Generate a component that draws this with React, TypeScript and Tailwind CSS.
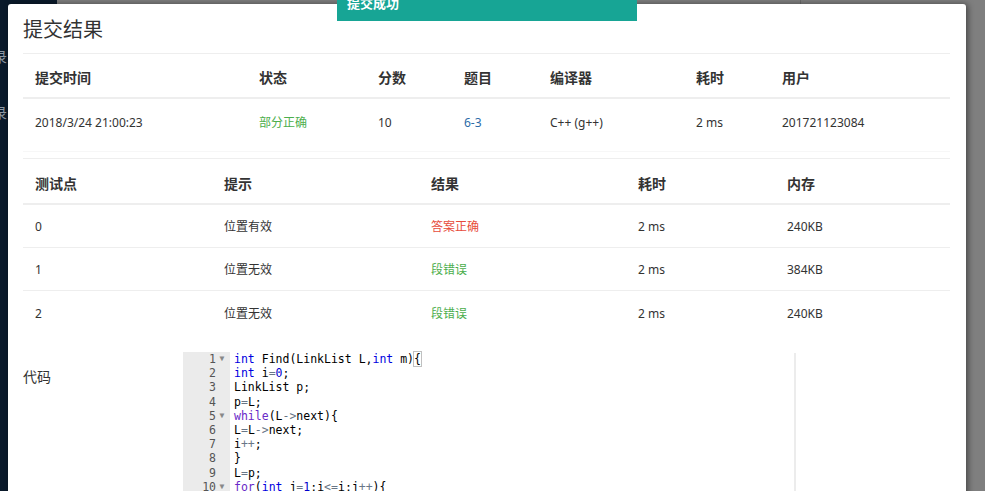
import React from 'react';

const cjk = '"Noto Sans", "Noto Sans CJK SC", sans-serif';
const mono = '"DejaVu Sans Mono", monospace';

const summaryHead = ['提交时间', '状态', '分数', '题目', '编译器', '耗时', '用户'];

const cases = [
  { id: '0', hint: '位置有效', result: '答案正确', color: 'text-[#e74c3c]', time: '2 ms', mem: '240KB' },
  { id: '1', hint: '位置无效', result: '段错误', color: 'text-[#4cae4c]', time: '2 ms', mem: '384KB' },
  { id: '2', hint: '位置无效', result: '段错误', color: 'text-[#4cae4c]', time: '2 ms', mem: '240KB' },
];

type Tok = [string, string?];

// ace "chrome"-like colours
const KW = 'text-[#0000e0]';
const CTRL = 'text-[#6a2ac8]';
const NUM = 'text-[#0000cd]';
const OP = 'text-[#687687]';

const code: { fold?: boolean; toks: Tok[] }[] = [
  { fold: true, toks: [['int', KW], [' Find(LinkList L,'], ['int', KW], [' m){']] },
  { toks: [['int', KW], [' i'], ['=', OP], ['0', NUM], [';']] },
  { toks: [['LinkList p;']] },
  { toks: [['p'], ['=', OP], ['L;']] },
  { fold: true, toks: [['while', CTRL], ['(L'], ['->', OP], ['next){']] },
  { toks: [['L'], ['=', OP], ['L'], ['->', OP], ['next;']] },
  { toks: [['i'], ['++', OP], [';']] },
  { toks: [['}']] },
  { toks: [['L'], ['=', OP], ['p;']] },
  { fold: true, toks: [['for', CTRL], ['('], ['int', KW], [' j'], ['=', OP], ['1', NUM], [';i'], ['<=', OP], ['i;j'], ['++', OP], ['){']] },
];

export default function App() {
  return (
    <div
      className="relative w-[985px] h-[491px] overflow-hidden bg-[#7f7f7f]"
      style={{ fontFamily: cjk }}
    >
      {/* dimmed page behind the dialog */}
      <div className="absolute left-0 top-0 h-full w-[57px] bg-[#0a1a2b]">
        <span className="absolute left-[-7px] top-[46px] text-[14px] text-[#8d97a3]">录</span>
        <span className="absolute left-[-7px] top-[102px] text-[14px] text-[#8d97a3]">录</span>
      </div>
      <div className="absolute left-[800px] top-0 h-[4px] w-px bg-[#6a6a6a]" />

      {/* dialog */}
      <div className="absolute left-[8px] top-[4px] w-[958px] h-[560px] bg-white rounded-[3px] shadow-[2px_0_6px_rgba(0,0,0,0.45)] pl-[15px] pr-[16px] text-[#333]">
        <div className="h-[49px] pt-[13px]">
          <h1 className="text-[20px] leading-[26px] font-normal text-[#333]">提交结果</h1>
        </div>

        {/* summary table */}
        <div className="border-t border-[#eee]">
          <div className="grid grid-cols-[224px_119px_86px_86px_146px_86px_1fr] h-[45px] pt-[3px] items-center border-b-2 border-[#eee] text-[14px] font-bold">
            {summaryHead.map((h) => (
              <div key={h} className="pl-[12px]">{h}</div>
            ))}
          </div>
          <div className="grid grid-cols-[224px_119px_86px_86px_146px_86px_1fr] h-[44px] pt-[3px] items-center text-[12px]">
            <div className="pl-[12px]">2018/3/24 21:00:23</div>
            <div className="pl-[12px] text-[#4cae4c]">部分正确</div>
            <div className="pl-[12px]">10</div>
            <div className="pl-[12px] text-[#2d6ca8]">6-3</div>
            <div className="pl-[12px]">C++ (g++)</div>
            <div className="pl-[12px]">2 ms</div>
            <div className="pl-[12px]">201721123084</div>
          </div>
          <div className="mt-[8px] h-px bg-[#f7f7f7]" />
        </div>

        {/* test cases */}
        <div className="mt-[6px] border-t border-[#eee]">
          <div className="grid grid-cols-[189px_207px_207px_149px_1fr] h-[46px] pt-[4px] items-center border-b-2 border-[#eee] text-[14px] font-bold">
            {['测试点', '提示', '结果', '耗时', '内存'].map((h) => (
              <div key={h} className="pl-[12px]">{h}</div>
            ))}
          </div>
          {cases.map((c, i) => (
            <div
              key={c.id}
              className={`grid grid-cols-[189px_207px_207px_149px_1fr] h-[43px] pt-[2px] items-center text-[12px] ${i < cases.length - 1 ? 'border-b border-[#eee]' : ''}`}
            >
              <div className="pl-[12px]">{c.id}</div>
              <div className="pl-[12px]">{c.hint}</div>
              <div className={`pl-[12px] ${c.color}`}>{c.result}</div>
              <div className="pl-[12px]">{c.time}</div>
              <div className="pl-[12px]">{c.mem}</div>
            </div>
          ))}
        </div>

        {/* code */}
        <div className="mt-[18px] flex">
          <div className="w-[160px] pt-[15px] text-[14px] leading-[20px]">代码</div>
          <div className="relative flex-1 flex">
            <div className="w-[47px] bg-[#ebebeb] text-[#555] text-[11.5px]" style={{ fontFamily: mono }}>
              {code.map((l, i) => (
                <div key={i} className="h-[14.2px] leading-[14.2px] flex justify-end pr-[2px]">
                  <span>{i + 1}</span>
                  <span className="w-[12px] text-center text-[8px] text-[#888]">{l.fold ? '▼' : ''}</span>
                </div>
              ))}
            </div>
            <div className="flex-1 pl-[4px] text-[11.5px] text-black whitespace-pre" style={{ fontFamily: mono }}>
              {code.map((l, i) => (
                <div key={i} className="h-[14.2px] leading-[14.2px]">
                  {l.toks.map(([t, c], j) =>
                    i === 0 && j === l.toks.length - 1 ? (
                      <span key={j}>
                        {' m)'}
                        <span className="outline outline-1 outline-[#c0c0c0]">{'{'}</span>
                      </span>
                    ) : (
                      <span key={j} className={c}>{t}</span>
                    )
                  )}
                </div>
              ))}
            </div>
            <div className="absolute left-[611px] top-[1px] bottom-0 w-[2px] bg-[#ececec]" />
          </div>
        </div>
      </div>

      {/* toast */}
      <div className="absolute left-[337px] top-[-12px] w-[300px] h-[33px] bg-[#17a595] pl-[10px] pt-[6px] text-[13px] leading-[18px] font-bold text-white">
        提交成功
      </div>
    </div>
  );
}
